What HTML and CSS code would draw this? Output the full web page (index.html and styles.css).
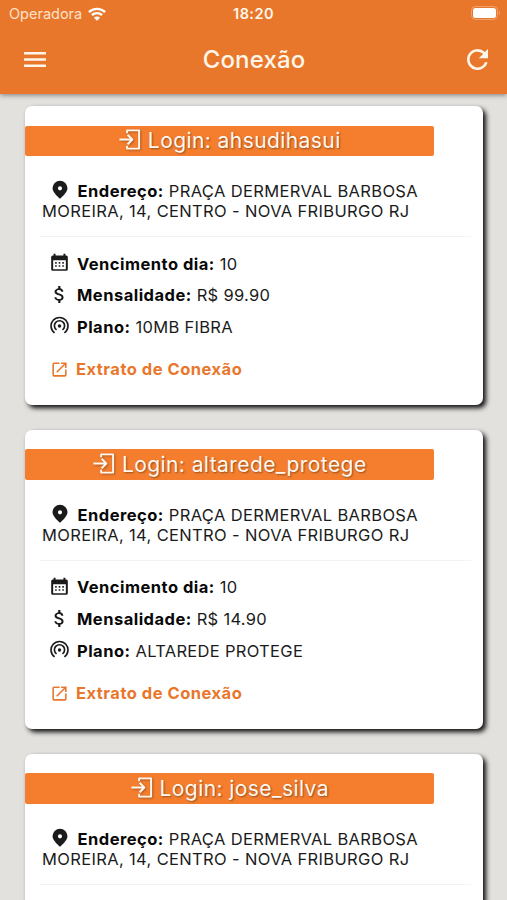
FILE: index.html
```html
<!DOCTYPE html>
<html lang="pt-BR">
<head>
<meta charset="utf-8">
<title>Conexão</title>
<link rel="stylesheet" href="styles.css">
</head>
<body>
<svg class="sprite" aria-hidden="true">
  <symbol id="login" viewBox="0 0 24 24"><path d="M1.500 12h13M10 7l5 5-5 5M9.500 5.500V2.500H22v19H9.500v-3" fill="none" stroke="currentColor" stroke-width="2" stroke-linejoin="round"/></symbol>
  <symbol id="pin" viewBox="0 0 24 24"><path fill="currentColor" fill-rule="evenodd" d="M12 1a9 9 0 0 0-9 9c0 5.500 9 12.500 9 12.500S21 15.500 21 10a9 9 0 0 0-9-9zm0 6.500a2.500 2.500 0 1 1 0 5 2.500 2.500 0 0 1 0-5z"/></symbol>
  <symbol id="calendar" viewBox="0 0 24 24"><path fill="currentColor" fill-rule="evenodd" d="M4.500 1H7v2h10V1h2.500v2h1a2 2 0 0 1 2 2v15.500a2 2 0 0 1-2 2h-17a2 2 0 0 1-2-2V5a2 2 0 0 1 2-2h1zM4 9v11.500h16V9z"/><path fill="currentColor" d="M6.500 11.500h2v2h-2zM11 11.500h2v2h-2zM15.500 11.500h2v2h-2zM6.500 15.500h2v2h-2zM11 15.500h2v2h-2zM15.500 15.500h2v2h-2z"/></symbol>
  <symbol id="money" viewBox="1.500 1.500 21 21"><path fill="currentColor" d="M11.800 10.900c-2.270-.590-3-1.200-3-2.150 0-1.090 1.010-1.850 2.700-1.850 1.780 0 2.440.850 2.500 2.100h2.210c-.070-1.720-1.120-3.300-3.210-3.810V2.500h-2.400v2.560c-1.940.420-4.100 1.780-4.100 3.710 0 2.310 1.910 3.460 4.700 4.130 2.500.600 3 1.480 3 2.410 0 .690-.490 1.790-2.700 1.790-2.060 0-2.870-.920-2.980-2.100h-2.200c.120 2.190 1.760 3.420 4.280 3.830v2.670H13v-2.650c1.950-.370 3.500-1.500 3.500-3.550 0-2.840-2.430-3.810-4.700-4.400z"/></symbol>
  <symbol id="signal" viewBox="0 0 24 24"><g fill="none" stroke="currentColor" stroke-width="2.100"><path d="M5.800 21.300a10.700 10.700 0 1 1 12.400 0M8.300 17.600a6.400 6.400 0 1 1 7.400 0"/></g><circle cx="12" cy="12.500" r="2.200" fill="currentColor"/></symbol>
  <symbol id="open" viewBox="0 0 24 24"><path fill="currentColor" d="M19 19H5V5h7V3H5a2 2 0 0 0-2 2v14a2 2 0 0 0 2 2h14c1.100 0 2-.900 2-2v-7h-2v7zM14 3v2h3.590l-9.830 9.830 1.410 1.410L19 6.410V10h2V3h-7z"/></symbol>
</svg>

<header class="topbar">
  <div class="status">
    <div class="carrier"><span>Operadora</span>
      <svg class="wifi" viewBox="0 0 18 14"><path fill="none" stroke="currentColor" stroke-width="2.400" d="M.9 5.200a11.600 11.600 0 0 1 16.200 0M3.900 8.200a7.300 7.300 0 0 1 10.200 0"/><path fill="currentColor" d="M9 13.700l-3.100-3a4.400 4.400 0 0 1 6.200 0z"/></svg>
    </div>
    <span class="clock">18:20</span>
    <svg class="battery" viewBox="0 0 30 14"><rect x=".5" y=".5" width="26" height="13" rx="4" fill="none" stroke="#f0a16f"/><rect x="2" y="2" width="23" height="10" rx="2.500" fill="#fff"/><path d="M28 4.500q2 2.500 0 5z" fill="#f0a16f"/></svg>
  </div>
  <div class="nav">
    <svg class="menu" viewBox="0 0 22 15"><path fill="currentColor" d="M0 0h22v2.600H0zM0 6.200h22v2.600H0zM0 12.400h22V15H0z"/></svg>
    <h1>Conexão</h1>
    <svg class="refresh" viewBox="4 4 16 16"><path fill="currentColor" d="M17.650 6.350A7.960 7.960 0 0 0 12 4a8 8 0 1 0 7.730 10h-2.080A6 6 0 1 1 12 6c1.660 0 3.140.690 4.220 1.780L13 11h7V4l-2.350 2.350z"/></svg>
  </div>
</header>

<main class="list">
  <article class="card">
    <h2 class="banner"><svg><use href="#login"/></svg><span>Login: ahsudihasui</span></h2>
    <p class="address"><svg><use href="#pin"/></svg><b>Endereço:</b> PRAÇA DERMERVAL BARBOSA<br>MOREIRA, 14, CENTRO - NOVA FRIBURGO RJ</p>
    <div class="details">
      <p><svg><use href="#calendar"/></svg><b>Vencimento dia:</b> 10</p>
      <p><svg><use href="#money"/></svg><b>Mensalidade:</b> R$ 99.90</p>
      <p><svg><use href="#signal"/></svg><b>Plano:</b> 10MB FIBRA</p>
    </div>
    <a class="extract"><svg><use href="#open"/></svg>Extrato de Conexão</a>
  </article>
  <article class="card">
    <h2 class="banner"><svg><use href="#login"/></svg><span>Login: altarede_protege</span></h2>
    <p class="address"><svg><use href="#pin"/></svg><b>Endereço:</b> PRAÇA DERMERVAL BARBOSA<br>MOREIRA, 14, CENTRO - NOVA FRIBURGO RJ</p>
    <div class="details">
      <p><svg><use href="#calendar"/></svg><b>Vencimento dia:</b> 10</p>
      <p><svg><use href="#money"/></svg><b>Mensalidade:</b> R$ 14.90</p>
      <p><svg><use href="#signal"/></svg><b>Plano:</b> ALTAREDE PROTEGE</p>
    </div>
    <a class="extract"><svg><use href="#open"/></svg>Extrato de Conexão</a>
  </article>
  <article class="card last">
    <h2 class="banner"><svg><use href="#login"/></svg><span>Login: jose_silva</span></h2>
    <p class="address"><svg><use href="#pin"/></svg><b>Endereço:</b> PRAÇA DERMERVAL BARBOSA<br>MOREIRA, 14, CENTRO - NOVA FRIBURGO RJ</p>
  </article>
</main>
</body>
</html>
```
FILE: styles.css
```css
* { box-sizing: border-box; margin: 0; padding: 0; }
body { width: 507px; height: 900px; overflow: hidden; background: #e2e1de; font-family: Inter, sans-serif; color: #1b1b1b; }
.sprite { display: none; }
svg { display: block; flex: none; }

.topbar { position: relative; z-index: 1; height: 94px; background: #e8772c; color: #fff6ea; box-shadow: 0 1px 5px rgba(0, 0, 0, .45); }
.status { display: grid; grid-template-columns: 1fr auto 1fr; align-items: center; height: 27px; padding: 0 6px 0 9px; }
.carrier { display: flex; align-items: center; gap: 6px; font-size: 14.500px; color: #ffe1c7; }
.wifi { width: 18px; height: 14px; color: #fff; }
.clock { margin-left: -3px; font-size: 14.500px; font-weight: 600; letter-spacing: .45px; }
.battery { width: 30px; height: 14px; justify-self: end; margin-top: -1px; }
.nav { display: grid; grid-template-columns: 1fr auto 1fr; align-items: center; height: 66px; padding: 0 19px 0 24px; }
.menu { width: 22px; height: 15px; margin-top: -1px; }
.nav h1 { margin-left: -4px; font-size: 24px; font-weight: 500; line-height: 30px; letter-spacing: .15px; }
.refresh { width: 21px; height: 21px; justify-self: end; margin-top: -2px; }

.list { display: flex; flex-direction: column; gap: 24.500px; height: 806px; overflow: hidden; padding: 12px 24px 0 25px; }
.card { height: 299.300px; flex: none; padding-top: 19.500px; border-radius: 7px; background: #fff; box-shadow: 3px 3px 5px rgba(0, 0, 0, .95); }
.last { height: 170px; }
.banner { display: flex; align-items: center; justify-content: center; gap: 7px; width: 408.500px; height: 30.500px; border-radius: 2px; background: #f47e2e; color: #fff8f0; font-size: 21px; font-weight: 400; letter-spacing: .42px; text-shadow: 1px 1px 2px rgba(0, 0, 0, .4); }
.banner svg { width: 23px; height: 23px; margin-top: -2px; filter: drop-shadow(1px 1px 1px rgba(0, 0, 0, .3)); }
.address { height: 56px; margin: 25.200px 12px 0 15px; padding: 0 0 15px 2px; border-bottom: 1px solid #f3f3f3; font-size: 16.500px; line-height: 20px; letter-spacing: .35px; white-space: nowrap; }
.address svg { display: inline-block; width: 20px; height: 20px; margin: -4px 8px 0 7.500px; vertical-align: -3px; }
b { font-weight: 700; letter-spacing: .48px; color: #080808; }
.details { padding: 10.500px 0 0 25px; font-size: 16.500px; letter-spacing: .3px; }
.details p { display: flex; align-items: center; height: 31.700px; white-space: pre; }
.details svg { width: 19px; height: 19px; margin: -2px 8px 0 0; }
.extract { display: flex; align-items: center; height: 20px; margin-top: 16.500px; padding-left: 25px; gap: 7px; color: #e8772c; font-size: 16.500px; font-weight: 700; letter-spacing: .5px; }
.extract svg { width: 19px; height: 19px; margin-top: 1px; }
```
